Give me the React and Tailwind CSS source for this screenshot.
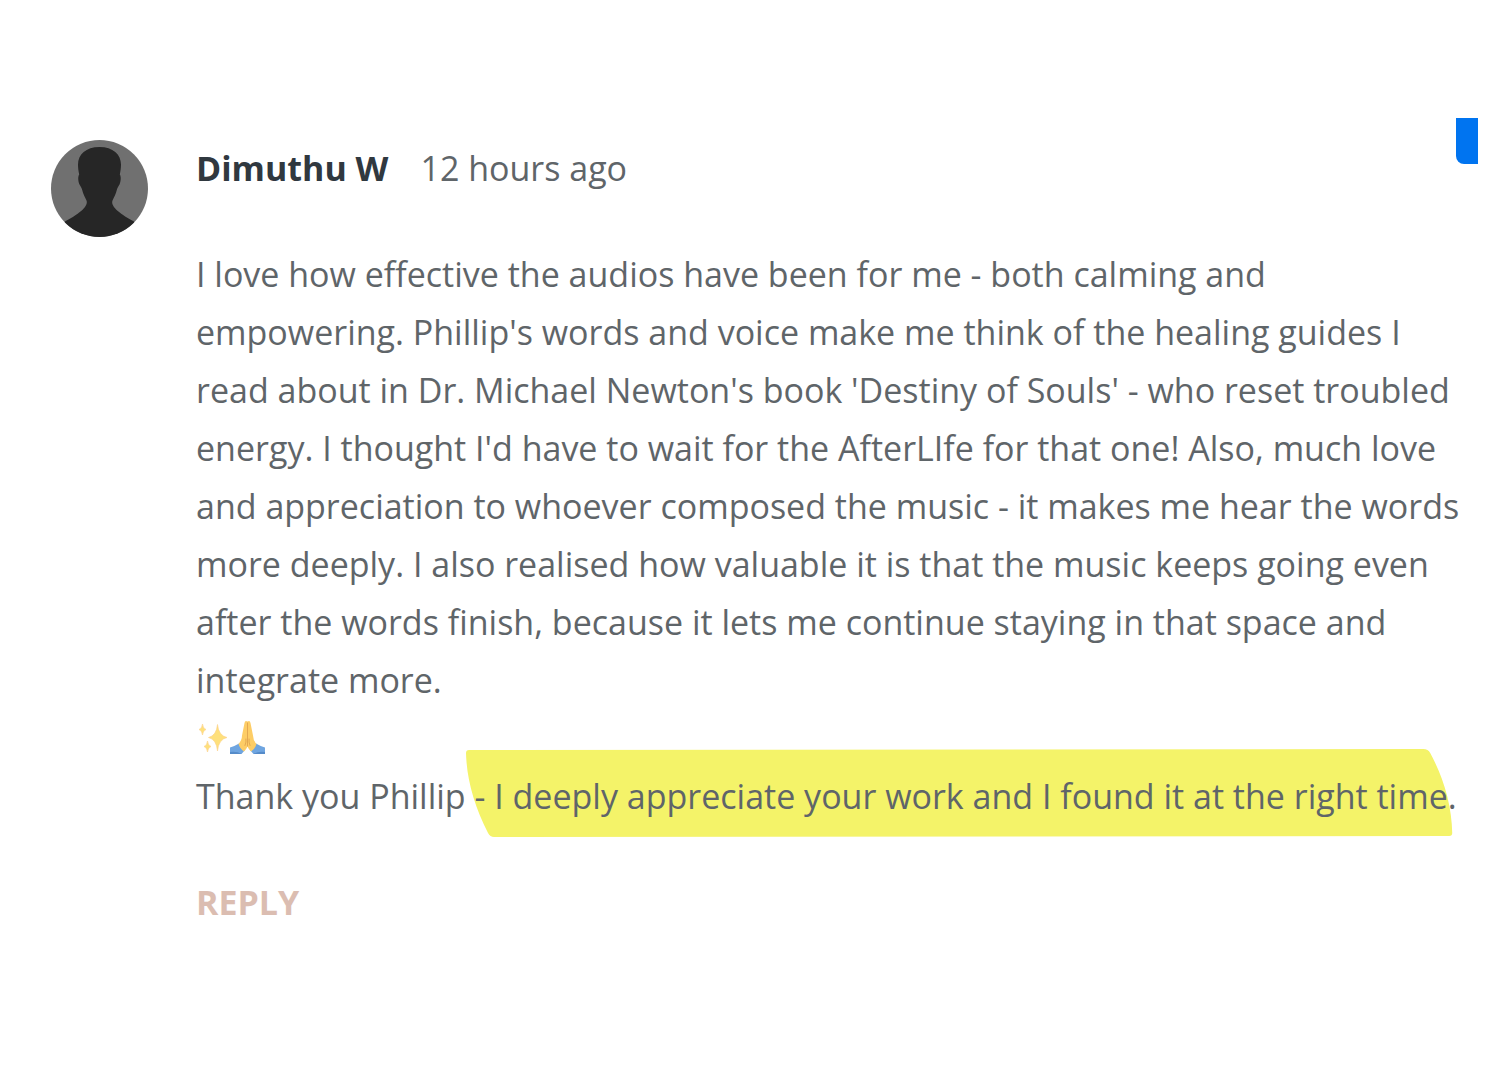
import React from 'react';

function Avatar() {
    return (
        <svg
            xmlns="http://www.w3.org/2000/svg"
            className="h-[97px] w-[97px] mt-[22px] shrink-0"
            viewBox="0 0 97 97"
            role="img"
            aria-label="Dimuthu W"
        >
            <clipPath id="avatar-clip">
                <circle cx="48.5" cy="48.5" r="48.5" />
            </clipPath>
            <g clipPath="url(#avatar-clip)">
                <rect width="97" height="97" fill="#707070" />
                <path
                    fill="#262626"
                    d="M48.500 7C35 7 27 14.500 27 24.500C27 28 27.500 31 28.200 34.500C26.800 36.500 27 41 28.500 44.500C29.500 46.500 30.500 47.500 31.200 50C32 54 34 57 35.500 60.500C38 67 26 75 14 81.500L8 97H90L83 81.500C71 75 59 67 61.500 60.500C63 57 65 54 65.800 50C66.500 47.500 67.500 46.500 68.500 44.500C70 41 70.200 36.500 68.800 34.500C69.500 31 70 28 70 24.500C70 14.500 62 7 48.500 7Z"
                />
            </g>
        </svg>
    )
}

function Sparkles() {
    return (
        <svg
            xmlns="http://www.w3.org/2000/svg"
            className="h-9 w-[33px]"
            viewBox="0 0 33 36"
            fill="#fee07c"
            stroke="#fbd08a"
            strokeWidth="0.6"
            strokeLinejoin="round"
            role="img"
            aria-label="Sparkles"
        >
            <path d="M20.500 4.500Q21.500 15.500 30 17.500Q21.500 19.500 20.500 31Q19.500 19.500 11.500 17.500Q19.500 15.500 20.500 4.500Z" />
            <path d="M5.500 4Q6 8.500 9 9.500Q6 10.500 5.500 15Q5 10.500 2 9.500Q5 8.500 5.500 4Z" />
            <path d="M10.500 21Q11 25.500 14 26.500Q11 27.500 10.500 32Q10 27.500 7 26.500Q10 25.500 10.500 21Z" />
        </svg>
    )
}

function FoldedHands() {
    return (
        <svg
            xmlns="http://www.w3.org/2000/svg"
            className="h-9 w-9"
            viewBox="0 0 36 36"
            role="img"
            aria-label="Folded hands"
        >
            <path fill="#6fa5e0" d="M0 27.500Q5 26 9 23.500L15 30L11.500 34H0Z" />
            <path fill="#6fa5e0" d="M35 27.500Q30 26 26 23.500L20 30L23.500 34H35Z" />
            <path fill="#558bc9" d="M0 32Q7 31 11.500 34H0ZM35 32Q28 31 23.500 34H35Z" />
            <path fill="#fdcd66" d="M17.500 1.500Q15 0 14.500 3L12 15.500Q12 20 8.500 24Q10 29 14 31.500Q16.500 29 17.500 26.500Q18.500 29 21 31.500Q25 29 26.500 24Q23 20 23 15.500L20.500 3Q20 0 17.500 1.500Z" />
            <path fill="none" stroke="#e3a851" strokeLinecap="round" d="M17.500 3V26M16 19Q16.500 22 15 25.500M19 19Q18.500 22 20 25.500" />
        </svg>
    )
}

function Highlight({ children }) {
    return (
        <span className="relative isolate inline-block">
            <svg
                xmlns="http://www.w3.org/2000/svg"
                className="absolute -left-2 -top-[18px] -z-10 h-[88px] w-[calc(100%+4px)]"
                viewBox="0 0 985 88"
                preserveAspectRatio="none"
                fill="#f4f369"
                aria-hidden="true"
            >
                <path d="M3 1L956 0Q961 0 963 4Q984 43 985 84Q985 87 982 87L28 88Q24 88 22 84Q1 43 0 4Q0 1 3 1Z" />
            </svg>
            {children}
        </span>
    )
}

function App() {
    return (
        <main className="relative flex items-start pt-[118px] pl-[51px] pr-8 font-['Open_Sans',sans-serif] text-[34px] leading-[58px] text-[#5f6569]">
            <Avatar />
            <article className="flex-1 min-w-0 pl-12 pt-[21px]">
                <header className="flex items-center gap-8">
                    <h2 className="font-bold text-[#30383f]">Dimuthu W</h2>
                    <time>12 hours ago</time>
                </header>
                <div className="mt-12">
                    <p>
                        I love how effective the audios have been for me - both calming and
                        empowering. Phillip's words and voice make me think of the healing guides I
                        read about in Dr. Michael Newton's book 'Destiny of Souls' - who reset troubled
                        energy. I thought I'd have to wait for the AfterLIfe for that one! Also, much love
                        and appreciation to whoever composed the music - it makes me hear the words
                        more deeply. I also realised how valuable it is that the music keeps going even
                        after the words finish, because it lets me continue staying in that space and
                        integrate more.
                    </p>
                    <p className="flex h-[58px] items-center pl-px">
                        <Sparkles />
                        <FoldedHands />
                    </p>
                    <p>
                        Thank you Phillip <Highlight>- I deeply appreciate your work and I found it at the right time.</Highlight>
                    </p>
                </div>
                <button type="button" className="mt-12 font-bold text-[#dbbdb1] cursor-pointer">
                    REPLY
                </button>
            </article>
            <button
                type="button"
                aria-label="Open panel"
                className="absolute top-[118px] right-[22px] h-[46px] w-[22px] rounded-bl-lg bg-[#0074f0] cursor-pointer"
            />
        </main>
    );
}

export default App;
